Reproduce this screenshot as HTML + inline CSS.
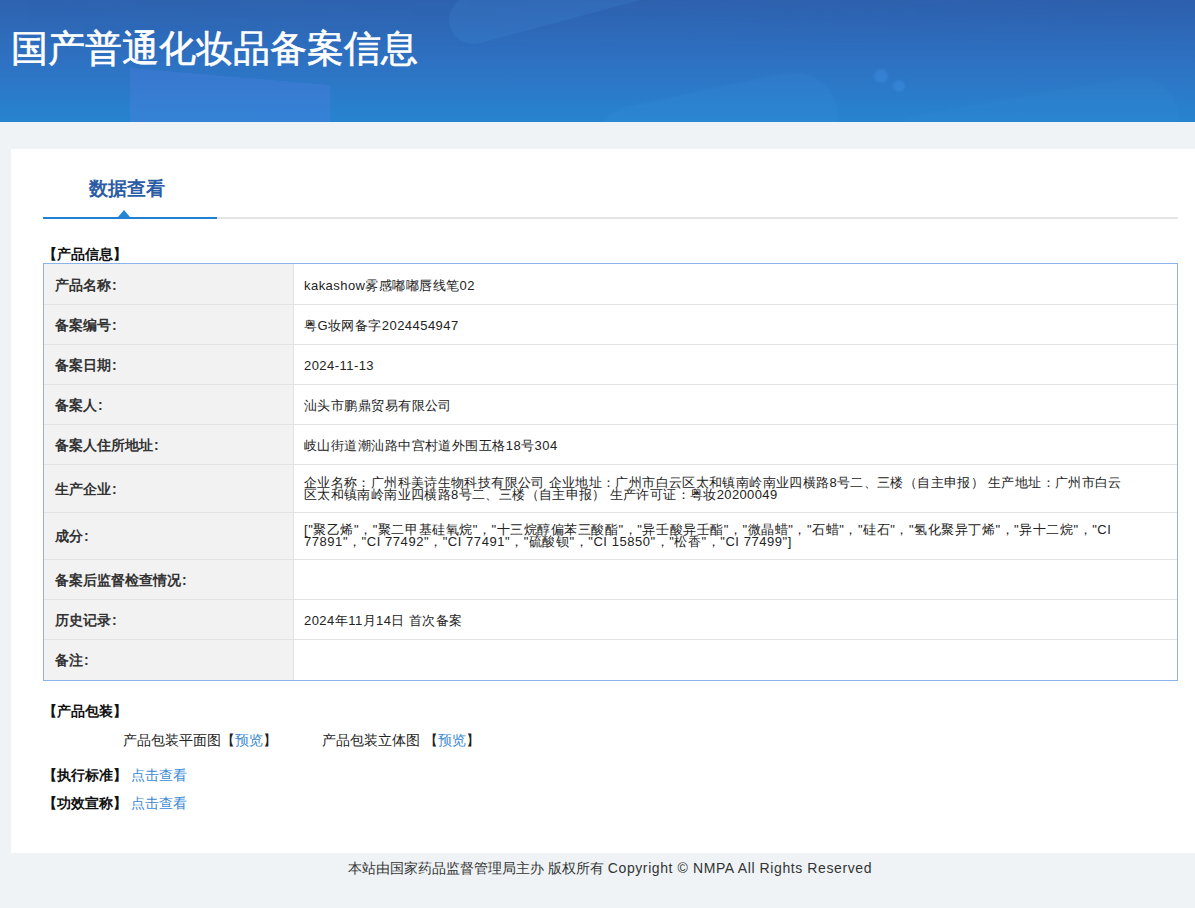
<!DOCTYPE html>
<html>
<head>
<meta charset="utf-8">
<style>
*{margin:0;padding:0;box-sizing:border-box;}
html,body{width:1195px;height:908px;overflow:hidden;}
body{background:#eff3f6;font-family:"Liberation Sans",sans-serif;color:#333;position:relative;}
.a{position:absolute;white-space:nowrap;}
.hd{left:0;top:0;width:1195px;height:122px;overflow:hidden;
background:linear-gradient(180deg,#2e63b0 0%,#2e71c2 50%,#2784cf 100%);}
.dk{left:0;top:0;width:1195px;height:50px;background:linear-gradient(90deg,rgba(40,70,150,0) 0%,rgba(40,70,150,0.05) 60%,rgba(40,70,150,0.12) 100%);-webkit-mask-image:linear-gradient(180deg,#000,transparent);}
.trap{left:130px;top:60px;width:200px;height:62px;background:rgba(90,130,235,0.28);clip-path:polygon(0 8px,100% 25px,100% 100%,0 100%);}
.blob1{left:449px;top:-4px;width:420px;height:48px;border-radius:24px;background:rgba(70,150,225,0.16);transform:rotate(-15deg);transform-origin:24px 24px;filter:blur(0.7px);}
.blob2{left:590px;top:89px;width:250px;height:90px;border-radius:45px;background:rgba(80,170,240,0.09);transform:rotate(-12deg);filter:blur(1px);}
.blob3{left:880px;top:96px;width:300px;height:80px;border-radius:40px;background:rgba(80,170,240,0.05);transform:rotate(-10deg);filter:blur(1px);}
.dot{border-radius:50%;background:rgba(70,150,235,0.35);filter:blur(0.8px);}
.hd .t{left:11px;top:27px;font-size:37px;font-weight:500;-webkit-text-stroke:0.6px #fff;line-height:44px;color:#fff;}
.card{left:11px;top:149px;width:1184px;height:704px;background:#fff;}
.tab{left:89px;top:176px;font-size:19px;font-weight:bold;color:#2b5ca6;line-height:26px;}
.tline{left:43px;top:217px;width:1135px;height:2px;background:#e4e4e4;}
.tact{left:43px;top:217px;width:174px;height:2px;background:#2180d2;}
.tri{left:118px;top:210px;width:0;height:0;border-left:6.5px solid transparent;border-right:6.5px solid transparent;border-bottom:7px solid #2387d8;}
.sec{font-size:14px;font-weight:bold;color:#111;line-height:18px;}
.tbl{left:43px;top:263px;width:1135px;height:418px;border:1px solid #8db4e8;background:#fff;}
.lc{left:0;top:0;width:250px;height:416px;background:#f2f2f2;border-right:1px solid #e3e3e3;}
.hl{left:0;width:1133px;height:1px;background:#e3e3e3;}
.lb{left:11px;font-size:14px;font-weight:bold;color:#333;line-height:14px;}
.rv{left:260px;font-size:13px;color:#222;line-height:12px;letter-spacing:0.45px;}
.lb i{font-style:normal;margin-left:1px;}
.pk{font-size:14px;color:#222;line-height:18px;}
.lk{color:#3a89d6;}
.ft{left:348px;top:858px;font-size:14px;color:#333;line-height:20px;}
</style>
</head>
<body>
<div class="a hd">
  <div class="a dk"></div>
  <div class="a trap"></div>
  <div class="a blob1"></div>
  <div class="a blob2"></div>
  <div class="a blob3"></div>
  <div class="a dot" style="left:874px;top:69px;width:14px;height:14px;"></div>
  <div class="a dot" style="left:893px;top:80px;width:12px;height:12px;"></div>
  <div class="a t">国产普通化妆品备案信息</div>
</div>
<div class="a card"></div>
<div class="a tab">数据查看</div>
<div class="a tline"></div>
<div class="a tact"></div>
<div class="a tri"></div>
<div class="a sec" style="left:43px;top:245px;">【产品信息】</div>
<div class="a tbl">
  <div class="a lc"></div>
  <div class="a hl" style="top:40px"></div>
  <div class="a hl" style="top:80px"></div>
  <div class="a hl" style="top:120px"></div>
  <div class="a hl" style="top:160px"></div>
  <div class="a hl" style="top:200px"></div>
  <div class="a hl" style="top:248px"></div>
  <div class="a hl" style="top:295px"></div>
  <div class="a hl" style="top:335px"></div>
  <div class="a hl" style="top:375px"></div>
  <div class="a lb" style="top:14px">产品名称<i>:</i></div>
  <div class="a lb" style="top:54px">备案编号<i>:</i></div>
  <div class="a lb" style="top:94px">备案日期<i>:</i></div>
  <div class="a lb" style="top:134px">备案人<i>:</i></div>
  <div class="a lb" style="top:174px">备案人住所地址<i>:</i></div>
  <div class="a lb" style="top:218px">生产企业<i>:</i></div>
  <div class="a lb" style="top:265px">成分<i>:</i></div>
  <div class="a lb" style="top:309px">备案后监督检查情况<i>:</i></div>
  <div class="a lb" style="top:349px">历史记录<i>:</i></div>
  <div class="a lb" style="top:389px">备注<i>:</i></div>
  <div class="a rv" style="top:16px">kakashow雾感嘟嘟唇线笔02</div>
  <div class="a rv" style="top:56px">粤G妆网备字2024454947</div>
  <div class="a rv" style="top:96px">2024-11-13</div>
  <div class="a rv" style="top:136px">汕头市鹏鼎贸易有限公司</div>
  <div class="a rv" style="top:176px">岐山街道潮汕路中宫村道外围五格18号304</div>
  <div class="a rv" style="top:213px;letter-spacing:0.37px">企业名称：广州科美诗生物科技有限公司 企业地址：广州市白云区太和镇南岭南业四横路8号二、三楼（自主申报） 生产地址：广州市白云<br>区太和镇南岭南业四横路8号二、三楼（自主申报） 生产许可证：粤妆20200049</div>
  <div class="a rv" style="top:260px;letter-spacing:0.55px">["聚乙烯"，"聚二甲基硅氧烷"，"十三烷醇偏苯三酸酯"，"异壬酸异壬酯"，"微晶蜡"，"石蜡"，"硅石"，"氢化聚异丁烯"，"异十二烷"，"CI<br>77891"，"CI 77492"，"CI 77491"，"硫酸钡"，"CI 15850"，"松香"，"CI 77499"]</div>
  <div class="a rv" style="top:351px">2024年11月14日 首次备案</div>
</div>
<div class="a sec" style="left:43px;top:702px;">【产品包装】</div>
<div class="a pk" style="left:123px;top:731px;">产品包装平面图【<span class="lk">预览</span>】</div>
<div class="a pk" style="left:322px;top:731px;">产品包装立体图 【<span class="lk">预览</span>】</div>
<div class="a sec" style="left:43px;top:766px;">【执行标准】 <span class="lk" style="font-weight:normal">点击查看</span></div>
<div class="a sec" style="left:43px;top:794px;">【功效宣称】 <span class="lk" style="font-weight:normal">点击查看</span></div>
<div class="a ft">本站由国家药品监督管理局主办 版权所有 <span style="letter-spacing:0.6px">Copyright © NMPA All Rights Reserved</span></div>
</body>
</html>
